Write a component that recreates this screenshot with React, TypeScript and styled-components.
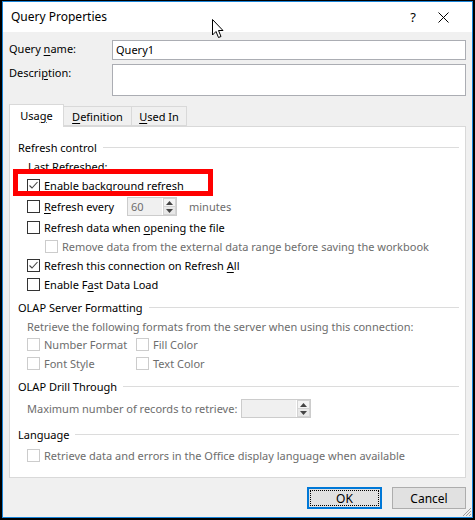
import React from 'react';
import styled, {createGlobalStyle} from 'styled-components';

const GlobalStyle = createGlobalStyle`
  html, body {
    margin: 0;
    padding: 0;
    background: #000;
  }
  body {
    font-family: 'Noto Sans', 'Segoe UI', sans-serif;
    font-size: 11px;
    color: #000;
  }
`;

const Frame = styled.div`
  width: 475px;
  height: 520px;
  box-sizing: border-box;
  padding: 1px 2px 2px 2px;
  background: #000;
`;

const Window = styled.div`
  position: relative;
  height: 100%;
  box-sizing: border-box;
  border: 1px solid #1883d7;
  background: #f0f0f0;
  display: flex;
  flex-direction: column;
`;

const TitleBar = styled.div`
  height: 30px;
  background: #fff;
  display: flex;
  align-items: center;
  padding-left: 8px;
  padding-right: 14px;
`;

const Title = styled.span`
  flex: 1;
  font-size: 12px;
  margin-top: -2px;
`;

const TitleButton = styled.span<{$w: number}>`
  width: ${p => p.$w}px;
  display: flex;
  justify-content: center;
  align-items: center;
  font-size: 13px;
`;

const Body = styled.div`
  flex: 1;
  display: flex;
  flex-direction: column;
  padding: 8px 6px 0 6px;
`;

const FieldRow = styled.div<{$h: number}>`
  display: flex;
  height: ${p => p.$h}px;
  margin-bottom: 4px;
`;

const FieldLabel = styled.label`
  width: 103px;
  line-height: 18px;
`;

const TextBox = styled.div`
  flex: 1;
  border: 1px solid #abadb3;
  background: #fff;
  padding: 0 3px;
  line-height: 18px;
`;

const TabStrip = styled.div`
  display: flex;
  align-items: flex-end;
  height: 22px;
  margin-top: 4px;
  position: relative;
  z-index: 1;
`;

const Tab = styled.div<{$active?: boolean; $w: number}>`
  width: ${p => p.$w}px;
  box-sizing: border-box;
  height: ${p => (p.$active ? 23 : 20)}px;
  margin-bottom: ${p => (p.$active ? -1 : 0)}px;
  border: 1px solid #d9d9d9;
  border-bottom: ${p => (p.$active ? 'none' : '1px solid #d9d9d9')};
  border-left: ${p => (p.$active ? '1px solid #d9d9d9' : 'none')};
  background: ${p => (p.$active ? '#fff' : '#f0f0f0')};
  display: flex;
  justify-content: center;
  align-items: center;
  padding-bottom: ${p => (p.$active ? 2 : 0)}px;
`;

const Panel = styled.div`
  position: relative;
  height: 352px;
  box-sizing: border-box;
  border: 1px solid #d9d9d9;
  background: #fff;
  padding: 11px 6px 0 0;
  display: flex;
  flex-direction: column;
`;

const Row = styled.div<{$gap?: number; $indent?: number; $muted?: boolean}>`
  height: 19px;
  margin-top: ${p => p.$gap || 0}px;
  padding-left: ${p => p.$indent ?? 17}px;
  display: flex;
  align-items: center;
  white-space: pre;
  color: ${p => (p.$muted ? '#6d6d6d' : '#000')};
`;

const SectionRow = styled(Row)`
  padding-left: 8px;
  &::after {
    content: '';
    flex: 1;
    height: 1px;
    margin-left: 6px;
    background: #dcdcdc;
  }
`;

const Text = styled.span<{$muted?: boolean; $left?: number}>`
  margin-left: ${p => p.$left || 0}px;
  color: ${p => (p.$muted ? '#6d6d6d' : 'inherit')};
`;

const Check = styled.span<{$disabled?: boolean}>`
  width: 13px;
  height: 13px;
  box-sizing: border-box;
  border: 1px solid ${p => (p.$disabled ? '#cccccc' : '#333')};
  background: #fff;
  margin-right: 4px;
  display: inline-flex;
  align-items: center;
  justify-content: center;
  flex: none;
`;

const CheckCell = styled.span<{$w?: number}>`
  display: inline-flex;
  align-items: center;
  width: ${p => (p.$w ? `${p.$w}px` : 'auto')};
`;

const Spin = styled.div<{$w: number}>`
  width: ${p => p.$w}px;
  height: 19px;
  box-sizing: border-box;
  border: 1px solid #cccccc;
  background: #f0f0f0;
  display: flex;
  color: #6d6d6d;
`;

const SpinValue = styled.span`
  flex: 1;
  padding-left: 3px;
  line-height: 17px;
`;

const SpinButtons = styled.span`
  width: 13px;
  display: flex;
  flex-direction: column;
  border-left: 1px solid #fff;
`;

const SpinButton = styled.span<{$top?: boolean}>`
  flex: 1;
  display: flex;
  align-items: center;
  justify-content: center;
  background: ${p => (p.$top ? '#f4f4f4' : '#e8e8e8')};
  border: 1px solid #d4d4d4;
  margin-top: ${p => (p.$top ? 0 : -1)}px;
`;

const Highlight = styled.div`
  position: absolute;
  left: 3px;
  top: 42px;
  width: 200px;
  height: 27px;
  box-sizing: border-box;
  border: 5px solid #ff0000;
  pointer-events: none;
`;

const ButtonRow = styled.div`
  display: flex;
  justify-content: flex-end;
  gap: 10px;
  margin-top: 9px;
`;

const DialogButton = styled.button<{$primary?: boolean}>`
  width: ${p => (p.$primary ? 75 : 74)}px;
  height: 22px;
  box-sizing: border-box;
  font: inherit;
  font-size: 12px;
  color: #000;
  background: #e1e1e1;
  border: ${p => (p.$primary ? '2px solid #0078d7' : '1px solid #adadad')};
  padding: 0;
  position: relative;
  &::before {
    content: '';
    display: ${p => (p.$primary ? 'block' : 'none')};
    position: absolute;
    inset: 1px;
    border: 1px dotted #000;
  }
`;

const Pointer = styled.svg`
  position: absolute;
  left: 208px;
  top: 16px;
`;

const Grip = styled.svg`
  position: absolute;
  right: 0;
  bottom: 0;
`;

const U = styled.span`
  text-decoration: underline;
  text-underline-offset: 2px;
`;

function Tick({color = '#444'}: {color?: string}) {
  return (
    <svg width="11" height="11" viewBox="0 0 11 11">
      <path d="M1.5 5.5 L4 8 L9.5 2" fill="none" stroke={color} strokeWidth="1.1" />
    </svg>
  );
}

function Arrow({up}: {up?: boolean}) {
  return (
    <svg width="7" height="4" viewBox="0 0 7 4">
      <path d={up ? 'M0 4 L3.5 0 L7 4 Z' : 'M0 0 L3.5 4 L7 0 Z'} fill="#444" />
    </svg>
  );
}

function SpinBox({value, w}: {value: string; w: number}) {
  return (
    <Spin $w={w}>
      <SpinValue>{value}</SpinValue>
      <SpinButtons>
        <SpinButton $top>
          <Arrow up />
        </SpinButton>
        <SpinButton>
          <Arrow />
        </SpinButton>
      </SpinButtons>
    </Spin>
  );
}

export default function App() {
  return (
    <Frame>
      <GlobalStyle />
      <Window>
        <TitleBar>
          <Title>Query Properties</Title>
          <TitleButton $w={30}>?</TitleButton>
          <TitleButton $w={30}>
            <svg width="11" height="11" viewBox="0 0 11 11">
              <path d="M0.5 0.5 L10.5 10.5 M10.5 0.5 L0.5 10.5" stroke="#000" strokeWidth="1" />
            </svg>
          </TitleButton>
        </TitleBar>
        <Pointer width="14" height="22" viewBox="0 0 14 22">
          <path
            d="M1.5 1.5 L1.5 17 L5 13.5 L7.5 19.5 L10 18.5 L7.5 12.5 L12 12.5 Z"
            fill="#fff"
            stroke="#000"
            strokeWidth="1"
          />
        </Pointer>
        <Body>
          <FieldRow $h={20}>
            <FieldLabel>
              Query <U>n</U>ame:
            </FieldLabel>
            <TextBox>Query1</TextBox>
          </FieldRow>
          <FieldRow $h={32}>
            <FieldLabel>
              Descri<U>p</U>tion:
            </FieldLabel>
            <TextBox />
          </FieldRow>
          <TabStrip>
            <Tab $active $w={55}>
              <Text>
                Usa<U>g</U>e
              </Text>
            </Tab>
            <Tab $w={68}>
              <Text>
                <U>D</U>efinition
              </Text>
            </Tab>
            <Tab $w={55}>
              <Text>
                <U>U</U>sed In
              </Text>
            </Tab>
          </TabStrip>
          <Panel>
            <SectionRow>
              <Text>Refresh control</Text>
            </SectionRow>
            <Row $indent={18}>
              <Text>Last Refreshed:</Text>
            </Row>
            <Row>
              <Check>
                <Tick />
              </Check>
              <Text>
                Enable back<U>g</U>round refresh
              </Text>
            </Row>
            <Row $gap={2}>
              <CheckCell $w={100}>
                <Check />
                <Text>
                  <U>R</U>efresh every
                </Text>
              </CheckCell>
              <SpinBox value="60" w={50} />
              <Text $muted $left={12}>
                minutes
              </Text>
            </Row>
            <Row $gap={2}>
              <Check />
              <Text>
                Refresh data when <U>o</U>pening the file
              </Text>
            </Row>
            <Row $indent={35} $muted>
              <Check $disabled />
              <Text>Remove data from the external data range before saving the workbook</Text>
            </Row>
            <Row>
              <Check>
                <Tick />
              </Check>
              <Text>
                Refresh this connection on Refresh <U>A</U>ll
              </Text>
            </Row>
            <Row>
              <Check />
              <Text>
                Enable F<U>a</U>st Data Load
              </Text>
            </Row>
            <SectionRow $gap={4}>
              <Text>OLAP Server Formatting</Text>
            </SectionRow>
            <Row $muted>
              <Text>Retrieve the following formats from the server when using this connection:</Text>
            </Row>
            <Row $gap={-1} $muted>
              <CheckCell $w={109}>
                <Check $disabled />
                <Text>Number Format</Text>
              </CheckCell>
              <CheckCell>
                <Check $disabled />
                <Text>Fill Color</Text>
              </CheckCell>
            </Row>
            <Row $muted>
              <CheckCell $w={109}>
                <Check $disabled />
                <Text>Font Style</Text>
              </CheckCell>
              <CheckCell>
                <Check $disabled />
                <Text>Text Color</Text>
              </CheckCell>
            </Row>
            <SectionRow $gap={4}>
              <Text>OLAP Drill Through</Text>
            </SectionRow>
            <Row $gap={3} $muted>
              <CheckCell $w={214}>
                <Text>Maximum number of records to retrieve:</Text>
              </CheckCell>
              <SpinBox value="" w={70} />
            </Row>
            <SectionRow $gap={7}>
              <Text>Language</Text>
            </SectionRow>
            <Row $gap={2} $muted>
              <Check $disabled />
              <Text>Retrieve data and errors in the Office display language when available</Text>
            </Row>
            <Highlight />
          </Panel>
          <ButtonRow>
            <DialogButton $primary>OK</DialogButton>
            <DialogButton>Cancel</DialogButton>
          </ButtonRow>
        </Body>
        <Grip width="12" height="12" viewBox="0 0 12 12">
          <path d="M11 3 L3 11 M11 6 L6 11 M11 9 L9 11" stroke="#a0a0a0" strokeWidth="1" />
        </Grip>
      </Window>
    </Frame>
  );
}
